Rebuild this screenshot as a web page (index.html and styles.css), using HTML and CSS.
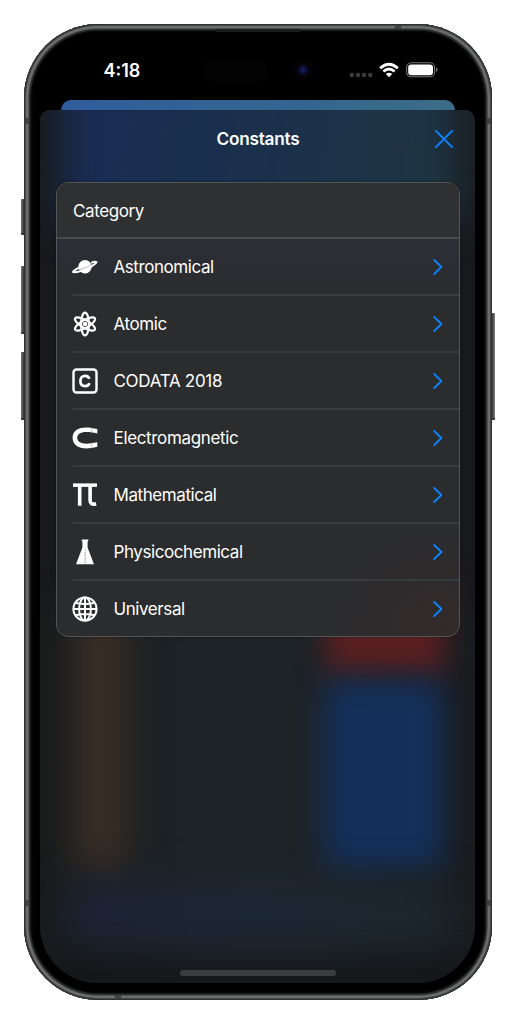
FILE: index.html
```
<!DOCTYPE html>
<html lang="en">
<head>
<meta charset="utf-8">
<title>Constants</title>
<link rel="stylesheet" href="styles.css">
</head>
<body>
<div class="phone">
  <i class="key key-action"></i><i class="key key-up"></i><i class="key key-down"></i><i class="key key-power"></i>
  <i class="band band-tl"></i><i class="band band-tr"></i><i class="band band-bl"></i><i class="band band-br"></i><i class="band band-top"></i><i class="band band-bottom"></i>
  <i class="earpiece"></i><i class="island"></i><i class="camera"></i>
  <div class="screen">
    <header class="status">
      <span class="time">4:18</span>
      <div class="indicators">
        <svg class="dots" viewBox="0 0 24 6"><g fill="#3c3c3d"><circle cx="2.8" cy="3" r="2.2"/><circle cx="9" cy="3" r="2.2"/><circle cx="15" cy="3" r="2.2"/><circle cx="21.2" cy="3" r="2.2"/></g></svg>
        <svg class="wifi" viewBox="0 0 20 16"><g fill="none" stroke="#fff" stroke-width="2.9"><path d="M1.2 6.2Q10-1.8 18.8 6.2"/><path d="M4.4 9.5Q10 4.5 15.6 9.5"/></g><path fill="#fff" d="M6.8 12Q10 9.4 13.2 12L10 15.2Z"/></svg>
        <svg class="battery" viewBox="0 0 32 16"><rect x=".6" y=".8" width="28" height="14" rx="4.6" fill="none" stroke="#777" stroke-width="1.1"/><rect x="2.2" y="2.4" width="24.8" height="10.8" rx="3.2" fill="#fff"/><path d="M30 5.6Q31.6 6.2 31.6 7.8T30 10Z" fill="#777"/></svg>
      </div>
    </header>
    <div class="under-sheet"></div>
    <main class="sheet">
      <div class="backdrop"><i class="glow edge"></i><i class="glow sky"></i><i class="glow amber"></i><i class="glow red"></i><i class="glow blue"></i><i class="glow navy"></i><i class="glow shade"></i></div>
      <div class="navbar">
        <h1 class="title">Constants</h1>
        <svg class="close" viewBox="0 0 18 18"><path d="M.9.9 17.1 17.1M17.1.9.9 17.1"/></svg>
      </div>
      <section class="card">
        <h2 class="card-head">Category</h2>
        <ul class="list">
          <li class="row">
            <svg class="icon" viewBox="0 0 26 26"><circle cx="13" cy="12.8" r="6.7" fill="#fff"/><path d="M7 13.6C2 16.3.5 17.8 1.2 18.1 4 18.6 11 16.5 17 13.8 22 11.2 25 8.5 24.5 8 23.8 7.6 21 8 19 8.8" fill="none" stroke="#fff" stroke-width="1.9"/><path d="M6.5 16.2Q14 14.2 19.6 10.4" fill="none" stroke="#a5a7aa" stroke-width=".8"/></svg>
            <span class="label">Astronomical</span><svg class="chevron" viewBox="0 0 10 16"><path d="M1.2 1 8.4 8 1.2 15"/></svg>
          </li>
          <li class="row">
            <svg class="icon" viewBox="0 0 26 26"><g fill="none" stroke="#fff" stroke-width="2.2"><ellipse cx="13" cy="13" rx="3.9" ry="11.4"/><ellipse cx="13" cy="13" rx="3.9" ry="11.4" transform="rotate(60 13 13)"/><ellipse cx="13" cy="13" rx="3.9" ry="11.4" transform="rotate(-60 13 13)"/></g><circle cx="13" cy="13" r="2.2" fill="#fff"/></svg>
            <span class="label">Atomic</span><svg class="chevron" viewBox="0 0 10 16"><path d="M1.2 1 8.4 8 1.2 15"/></svg>
          </li>
          <li class="row">
            <svg class="icon" viewBox="0 0 26 26"><rect x="1.5" y="1.5" width="23" height="23" rx="3" fill="none" stroke="#fff" stroke-width="2.4"/><path d="M17.3 10.8C16.8 8.9 15.3 7.9 13.2 7.9 10.2 7.9 8.4 9.8 8.4 13S10.2 18.1 13.2 18.1C15.4 18.1 16.9 17 17.4 15.1" fill="none" stroke="#fff" stroke-width="2.7"/></svg>
            <span class="label">CODATA 2018</span><svg class="chevron" viewBox="0 0 10 16"><path d="M1.2 1 8.4 8 1.2 15"/></svg>
          </li>
          <li class="row">
            <svg class="icon" viewBox="0 0 26 26"><path d="M25.3 4C18 2.1 13 2 8.8 3.1 3.3 4.5.6 8.2.6 12.8S3.3 21.3 8.8 22.7C13 23.8 18 23.6 25.3 21.8V17.3C18.5 18.8 13.5 19 10.2 18.2 6.8 17.4 5.2 15.5 5.2 12.8S6.8 8.3 10.2 7.5C13.5 6.8 18.5 7 25.3 8.5Z" fill="#fff"/><path d="M19.7 2.5V8M19.7 17.5V23.3" stroke="#aaa" stroke-width=".7"/></svg>
            <span class="label">Electromagnetic</span><svg class="chevron" viewBox="0 0 10 16"><path d="M1.2 1 8.4 8 1.2 15"/></svg>
          </li>
          <li class="row">
            <svg class="icon" viewBox="0 0 26 26"><path d="M1 1.4H25V4.9H1Z" fill="#fff"/><path d="M7.7 3V23.7M18.1 3V18.6C18.1 21.4 19.8 22.6 24.2 22" fill="none" stroke="#fff" stroke-width="3.6"/></svg>
            <span class="label">Mathematical</span><svg class="chevron" viewBox="0 0 10 16"><path d="M1.2 1 8.4 8 1.2 15"/></svg>
          </li>
          <li class="row">
            <svg class="icon" viewBox="0 0 26 26"><path d="M9.7.4H16.3V2L15.6 2.6V8.4L22 25.2H4L10.4 8.4V2.6L9.7 2Z" fill="#fff"/><path d="M13.4 9.2V24" stroke="#909192" stroke-width=".7" stroke-dasharray="1 1"/><path d="M12 23.2H14M12 20H14M12 17H14M12 14H14" stroke="#a5a6a7" stroke-width=".7"/></svg>
            <span class="label">Physicochemical</span><svg class="chevron" viewBox="0 0 10 16"><path d="M1.2 1 8.4 8 1.2 15"/></svg>
          </li>
          <li class="row">
            <svg class="icon" viewBox="0 0 26 26"><g fill="none" stroke="#fff" stroke-width="2"><circle cx="13" cy="13" r="11.6"/><ellipse cx="13" cy="13" rx="5.9" ry="11.5"/><path d="M13 1.5V24.5M1.5 13H24.5M3.5 6.8Q13 9.2 22.5 6.8M3.5 19.2Q13 16.8 22.5 19.2"/></g></svg>
            <span class="label">Universal</span><svg class="chevron" viewBox="0 0 10 16"><path d="M1.2 1 8.4 8 1.2 15"/></svg>
          </li>
        </ul>
      </section>
      <div class="home-bar"></div>
    </main>
  </div>
</div>
</body>
</html>
```
FILE: styles.css
```
* { box-sizing: border-box; }
body { margin: 0; padding: 24px; background: #fff; font-family: Inter, "Liberation Sans", sans-serif; color: #fff; }
svg { display: block; }
.phone {
  position: relative; width: 468px; height: 976px; padding: 16px 17px 17px 16px; border-radius: 74px; background: #000;
  box-shadow: inset 0 0 0 1px #303332, inset 0 0 0 2px #464847, inset 0 0 0 4.5px #6c6d6c, inset 0 0 0 5.5px #343635, inset 0 0 0 6.5px #292b2a, inset 0 0 3px 7px #141515;
}
.screen { position: relative; display: flex; flex-direction: column; height: 943px; border-radius: 0 0 58px 58px; overflow: hidden; }

/* Hardware details over the frame */
.key { position: absolute; left: -3px; width: 3px; border-radius: 1px 0 0 1px; background: linear-gradient(90deg, #777, #333); border-top: 1px solid #555; border-bottom: 2px solid #333; }
.key-action { top: 175px; height: 36px; }
.key-up { top: 242px; height: 68px; }
.key-down { top: 328px; height: 68px; }
.key-power { left: auto; right: -3px; top: 289px; height: 107px; border-radius: 0 1px 1px 0; background: linear-gradient(90deg, #333, #858683); }
.band { position: absolute; width: 4px; height: 6px; background: #404241; }
.band-tl { left: 1px; top: 94px; }
.band-tr { right: 1px; top: 94px; }
.band-bl { left: 1px; top: 876px; }
.band-br { right: 1px; top: 876px; }
.band-top { left: 371px; top: 1px; width: 6px; height: 4px; }
.band-bottom { left: 91px; bottom: 1px; width: 6px; height: 4px; }
.earpiece { position: absolute; left: 191px; top: 5px; width: 86px; height: 3px; border-radius: 0 0 3px 3px; background: #1c1e1b; }
.island { position: absolute; left: 179px; top: 35px; width: 65px; height: 23px; border-radius: 12px; background: #030303; }
.camera { position: absolute; left: 269px; top: 36px; width: 20px; height: 20px; border-radius: 50%; background: radial-gradient(circle, #151b55 0 1.5px, #090b2c 4px, #07070e 5.5px, #050306 6px 10px); }

.status { display: flex; justify-content: space-between; height: 60px; padding: 18px 37px 0 63.5px; }
.time { font-size: 18px; line-height: 25px; font-weight: 600; letter-spacing: 0; }
.indicators { display: flex; align-items: flex-start; }
.dots { width: 24px; height: 6px; margin: 14px 6px 0 0; }
.wifi { width: 20px; height: 16px; margin: 3.5px 7.5px 0 0; }
.battery { width: 32px; height: 16px; margin-top: 4px; }

.under-sheet { flex: none; height: 10px; margin: 0 20px 0 21px; border-radius: 10px 10px 0 0; background: linear-gradient(90deg, #305d9c, #35658f 60%, #3c6d87); }
.sheet { position: relative; flex: 1; display: flex; flex-direction: column; padding: 0 15px 0 16px; border-radius: 10px 10px 0 0; overflow: hidden; background: #1d2227; }

/* Blurred colours seen through the sheet */
.backdrop { position: absolute; inset: 0; overflow: hidden; background: linear-gradient(90deg, #191b1c, #1e2327 35% 65%, #1a1c1f); }
.glow { position: absolute; filter: blur(18px); }
.sky { left: 22px; right: 18px; top: -50px; height: 165px; background: linear-gradient(100deg, #182c55, #1a304b 50%, #1e3542); }
.edge { left: -20px; right: -20px; top: 100px; height: 390px; background: #18191d; }
.amber { left: 36px; top: 490px; width: 50px; height: 272px; background: #3b2f26; }
.red { left: 287px; top: 460px; width: 116px; height: 103px; background: #5c1f21; filter: blur(14px); }
.blue { left: 285px; top: 571px; width: 118px; height: 188px; background: #13305b; filter: blur(15px); }
.navy { left: 30px; right: 30px; top: 775px; height: 60px; background: linear-gradient(90deg, #1d2438, #1d2836 50%, #1c2830); filter: blur(20px); }
.shade { left: -10px; right: -10px; bottom: -22px; height: 40px; background: #131416; }

.navbar { position: relative; height: 72px; display: grid; grid-template-columns: 1fr auto 1fr; align-items: center; padding: 0 7px 14px; }
.title { grid-column: 2; margin: 0; font-size: 17.2px; line-height: 22px; font-weight: 600; letter-spacing: -.24px; }
.close { justify-self: end; width: 18px; height: 18px; fill: none; stroke: #0a84ff; stroke-width: 1.9; stroke-linecap: round; }
.card { position: relative; height: 455px; border: 1.3px solid #535557; border-radius: 12px; overflow: hidden; box-shadow: 0 0 2px #0008; background: radial-gradient(circle at 95% 100%, #332a2a, #2b2c2e00 110px), #2b2c2e; }
.card-head { height: 56px; margin: 0; padding: 0 16px; border-bottom: 2px solid #4a4b4d; background: #2f3032; font-size: 17px; line-height: 56px; font-weight: 400; letter-spacing: -.4px; }
.list { margin: 0; padding: 0; list-style: none; }
.row { display: flex; align-items: center; height: 57px; margin-left: 16px; padding-right: 16px; border-bottom: 2px solid #3a3b3d; }
.row:first-child { background: linear-gradient(#2b2e36, #2b2c2e00); margin-left: 0; padding: 0 16px 2px; border-bottom: 0; }
.row:first-child + .row { box-shadow: 0 -2px #3a3b3d; }
.row:last-child { border-bottom-color: transparent; }
.icon { flex: none; width: 26px; height: 26px; margin-left: -1px; }
.label { margin-left: 15.5px; font-size: 17px; line-height: 24px; letter-spacing: -.42px; }
.row:nth-child(3) .label { letter-spacing: -.3px; }
.row:nth-child(4) .label { letter-spacing: -.34px; }
.chevron { width: 10px; height: 16px; margin-left: auto; fill: none; stroke: #0a84ff; stroke-width: 1.8; stroke-linecap: round; stroke-linejoin: round; }
.home-bar { position: relative; width: 156px; height: 5.5px; margin: auto auto 7.5px; border-radius: 3px; background: #3b3c3e; }
```
